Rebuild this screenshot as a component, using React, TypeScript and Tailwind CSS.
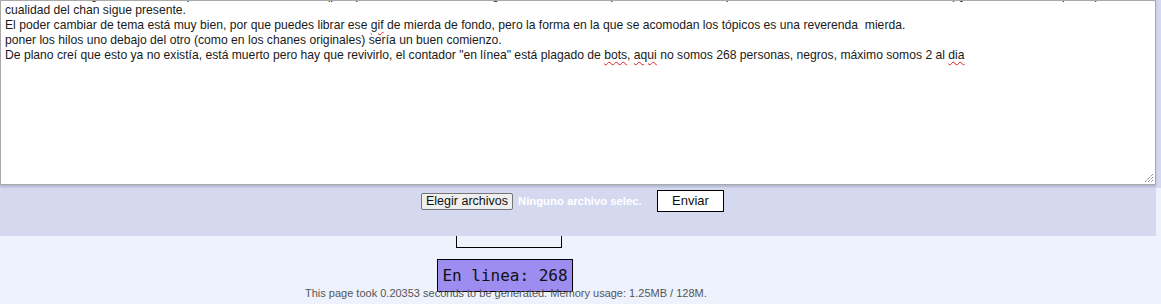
import React from "react";

const sc = "underline decoration-wavy decoration-[#e02020] decoration-1 underline-offset-2";

export default function App() {
  return (
    <div className="relative w-[1161px] h-[304px] overflow-hidden bg-[#eef2fd]" style={{ fontFamily: '"Liberation Sans", Arial, sans-serif' }}>
      <div className="flex">
        <div className="w-[1156px] bg-[#d5d9f0]">
          <div className="relative h-[185px] overflow-hidden border border-[#a9a9a9] bg-white px-[4px] shadow-[0_2px_2px_rgba(150,160,190,0.6)]">
            <div className="mt-[-13px] text-[12.15px] leading-[15px] text-[#1a1a1a] whitespace-nowrap">
              <div>Hola a todos, regreso al chan después de años de no venir (por que nunca me terminó de gustar la forma en la que los hilos están dispuestos, o sea revueltos en dos columnas) y veo con tristeza que la poor</div>
              <div>cualidad del chan sigue presente.</div>
              <div>
                El poder cambiar de tema está muy bien, por que puedes librar ese <span className={sc}>gif</span> de mierda de fondo, pero la forma en la que se acomodan los tópicos es una reverenda &nbsp;mierda.
              </div>
              <div>poner los hilos uno debajo del otro (como en los chanes originales) sería un buen comienzo.</div>
              <div>
                De plano creí que esto ya no existía, está muerto pero hay que revivirlo, el contador "en línea" está plagado de <span className={sc}>bots</span>, <span className={sc}>aqui</span> no somos 268 personas, negros, máximo somos 2 al <span className={sc}>dia</span>
              </div>
            </div>
            <svg className="absolute right-[1px] bottom-[1px]" width="10" height="10" viewBox="0 0 10 10">
              <path d="M9 1 L1 9 M9 4 L4 9 M9 7 L7 9" stroke="#555" strokeWidth="1" strokeDasharray="1 1" />
            </svg>
          </div>
          <div className="flex h-[51px] items-start pl-[421px] pt-[5px]">
            <div className="mt-[3px] flex items-center">
              <span className="flex h-[17px] w-[92px] items-center justify-center rounded-[2px] border border-[#767676] bg-[#efefef] text-[12.5px] text-[#111]">
                Elegir archivos
              </span>
              <span className="ml-[5px] w-[123px] whitespace-nowrap text-[11.3px] font-bold text-white">Ninguno archivo selec.</span>
            </div>
            <span className="ml-[16px] flex h-[22px] w-[67px] items-center justify-center border border-black bg-white text-[13px] text-[#111]">
              Enviar
            </span>
          </div>
        </div>
        <div className="w-[5px] h-[188px] bg-[#d5d9f0]"></div>
      </div>
      <div className="ml-[456px] h-[12px] w-[106px] border-x border-b border-black"></div>
      <div
        className="ml-[437px] mt-[11px] flex h-[33px] w-[136px] items-center justify-center border border-black bg-[#9d8df1] text-[16px] text-[#111]"
        style={{ fontFamily: '"DejaVu Sans Mono", monospace' }}
      >
        En linea: 268
      </div>
      <div className="relative ml-[305px] mt-[-5px] text-[11px] leading-[12px] text-[#555] whitespace-nowrap">
        This page took 0.20353 seconds to be generated. Memory usage: 1.25MB / 128M.
      </div>
    </div>
  );
}
